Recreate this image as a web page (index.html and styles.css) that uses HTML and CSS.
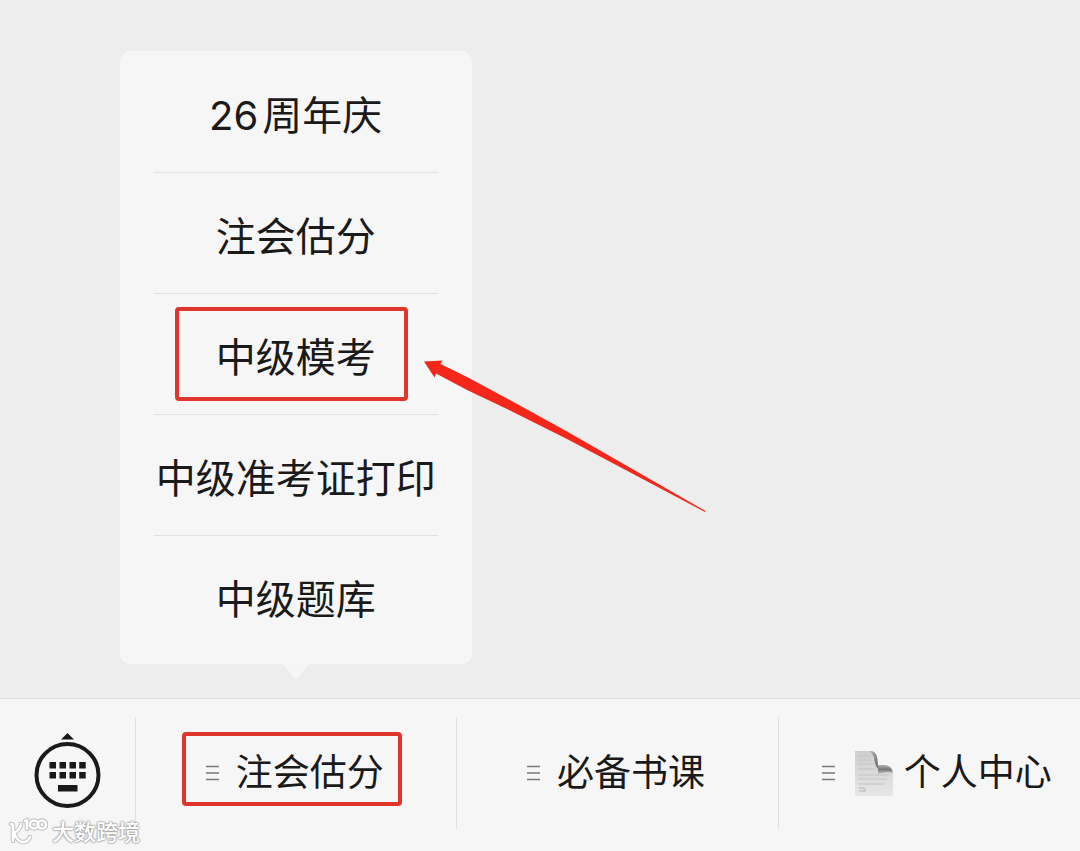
FILE: index.html
```
<!DOCTYPE html>
<html lang="zh-CN">
<head>
    <meta charset="UTF-8">
    <meta name="viewport" content="width=device-width, initial-scale=1.0">
    <title>注会估分</title>
    <link rel="stylesheet" href="styles.css">
</head>
<body>
    <main class="chat"></main>

    <footer class="bar">
        <button class="keyboard" type="button" aria-label="键盘">
            <svg width="68" height="76" viewBox="0 0 68 76" fill="#1a1a1a">
                <path d="M33.500 0L40 6.500H27z"/>
                <circle cx="33.500" cy="42" r="31" fill="none" stroke="#1a1a1a" stroke-width="4"/>
                <path d="M15.500 29h6.500v6.500h-6.500zM25.500 29h6.500v6.500h-6.500zM35.500 29h6.500v6.500h-6.500zM45.200 29h6.500v6.500h-6.500z"/>
                <path d="M15.500 39h6.500v6.500h-6.500zM25.500 39h6.500v6.500h-6.500zM35.500 39h6.500v6.500h-6.500zM45.200 39h6.500v6.500h-6.500z"/>
                <path d="M24 52h19.500v6.500H24z"/>
            </svg>
        </button>

        <nav class="tabs">
            <div class="tab">
                <button class="tab-button" type="button">
                    <span class="tab-label marked">
                        <svg class="lines" width="14" height="16" viewBox="0 0 14 16"><path d="M0 1.500h13M0 8h13M0 14.500h13"/></svg>
                        注会估分
                    </span>
                </button>

                <!-- Untermenü über dem ersten Tab -->
                <div class="popup">
                    <ul class="menu">
                        <li><a href="#"><span class="number">26</span>周年庆</a></li>
                        <li><a href="#">注会估分</a></li>
                        <li><a href="#"><span class="marked">中级模考</span></a></li>
                        <li><a href="#">中级准考证打印</a></li>
                        <li><a href="#">中级题库</a></li>
                    </ul>
                    <svg class="arrow" width="284" height="154" viewBox="0 0 284 154">
                        <path d="M0 1.500L18.500 0.500L16.500 4L43 17L83 38.500L143 71.500L281.500 151L281 152L143 79L83 49L43 30L12 13.500L10.500 17.500z" fill="#f5261a"/>
                    </svg>
                </div>
            </div>

            <div class="tab">
                <button class="tab-button" type="button">
                    <span class="tab-label">
                        <svg class="lines" width="14" height="16" viewBox="0 0 14 16"><path d="M0 1.500h13M0 8h13M0 14.500h13"/></svg>
                        必备书课
                    </span>
                </button>
            </div>

            <div class="tab">
                <button class="tab-button" type="button">
                    <span class="tab-label">
                        <svg class="lines" width="14" height="16" viewBox="0 0 14 16"><path d="M0 1.500h13M0 8h13M0 14.500h13"/></svg>
                        <span class="with-page">
                            <svg width="40" height="46" viewBox="0 0 40 46">
                                <defs>
                                    <linearGradient id="sheet" x1="0" y1="0" x2="0" y2="1">
                                        <stop offset="0" stop-color="#cfcfcf"/>
                                        <stop offset="1" stop-color="#e6e6e6"/>
                                    </linearGradient>
                                    <linearGradient id="curl" x1="0" y1="0" x2="0" y2="1">
                                        <stop offset="0" stop-color="#b0b0b0"/>
                                        <stop offset="0.500" stop-color="#777"/>
                                        <stop offset="1" stop-color="#c8c8c8"/>
                                    </linearGradient>
                                    <linearGradient id="fold" x1="0" y1="0" x2="1" y2="0">
                                        <stop offset="0" stop-color="#888" stop-opacity="0"/>
                                        <stop offset="1" stop-color="#666"/>
                                    </linearGradient>
                                </defs>
                                <path d="M1 1H18Q24 2 24 15H32Q38 16 39 23V46H1z" fill="url(#sheet)"/>
                                <path d="M14 1H18Q24 2 24 19Q20 14 20 8Q19 3 14 1z" fill="url(#fold)"/>
                                <path d="M24 15H31Q38 16 39 23Q33 21 24 24z" fill="url(#curl)"/>
                                <path d="M4 6h12M4 10h14M4 14h16M4 19h17M4 25h31M4 29h29M4 34h27" stroke="#c4c4c4" fill="none"/>
                                <path d="M5 38h4l3 2M5 41h7" stroke="#b4b4b4" fill="none"/>
                            </svg>
                            个人中心
                        </span>
                    </span>
                </button>
            </div>
        </nav>
    </footer>

    <!-- Wasserzeichen -->
    <div class="watermark">
        <svg width="40" height="30" viewBox="0 0 40 30" fill="none" stroke-linecap="round" stroke-linejoin="round">
            <g stroke="#bcbcbc" stroke-width="4.500">
                <path d="M3 7L5 8V24M13 7Q12 13 6 16Q10 26 16 25Q20 25 22 20"/>
                <path d="M17 4L19 3V12"/>
                <circle cx="26" cy="7.500" r="4"/>
                <circle cx="34" cy="7.500" r="4"/>
            </g>
            <g stroke="#fff" stroke-width="2.600">
                <path d="M3 7L5 8V24M13 7Q12 13 6 16Q10 26 16 25Q20 25 22 20"/>
                <path d="M17 4L19 3V12"/>
                <circle cx="26" cy="7.500" r="4"/>
                <circle cx="34" cy="7.500" r="4"/>
            </g>
        </svg>
        <span>大数跨境</span>
    </div>
</body>
</html>
```

FILE: styles.css
```
/* Allgemeines Styling */
* {
    box-sizing: border-box;
}

body {
    font-family: Inter, "Noto Sans CJK SC", sans-serif;
    display: flex;
    flex-direction: column;
    min-height: 100vh;
    margin: 0;
    background-color: #ededed;
    color: #1a1a1a;
    position: relative;
}

button {
    margin: 0;
    padding: 0;
    border: none;
    background: none;
    color: inherit;
    font: inherit;
    cursor: pointer;
}

svg {
    display: block;
    flex-shrink: 0;
}

.chat {
    flex: 1;
}

/* Untere Leiste */
.bar {
    display: flex;
    height: 153px;
    border-top: 1px solid #e0e0e0;
    background-color: #f6f6f6;
}

.keyboard {
    display: flex;
    justify-content: center;
    align-items: center;
    width: 135px;
    padding-bottom: 8px;
}

.tabs {
    display: flex;
    flex: 1;
}

.tab {
    display: flex;
    width: 34%;
    padding: 18px 0 22px;
    position: relative;
}
.tab:last-child {
    flex: 1;
}
.tab:last-child .tab-label {
    gap: 18px;
    margin-left: 18px;
}

.tab-button {
    flex: 1;
    display: flex;
    justify-content: center;
    align-items: center;
    padding-right: 3px;
    border-left: 1px solid #e0e0e0;
}

.tab-label {
    display: flex;
    align-items: center;
    gap: 16px;
    font-size: 37px;
    line-height: 52px;
    white-space: nowrap;
}

.with-page {
    display: flex;
    align-items: center;
    gap: 10px;
}

.lines {
    fill: none;
    stroke: #777;
    stroke-width: 1.5;
}

/* Untermenü */
.popup {
    position: absolute;
    bottom: calc(100% + 35px);
    left: 50%;
    width: 352px;
    margin-left: -176px;
    padding: 0 34px;
    border-radius: 10px;
    background-color: #f6f6f6;
}
.popup::after {
    content: "";
    position: absolute;
    top: 100%;
    left: 50%;
    margin-left: -13px;
    border: 13px solid transparent;
    border-top: 16px solid #f6f6f6;
    border-bottom: none;
}

.menu {
    margin: 0;
    padding: 1px 0 8px;
    list-style: none;
}
.menu li {
    border-bottom: 1px solid #e3e3e3;
}
.menu li:last-child {
    border-bottom: none;
}
.menu a {
    display: block;
    padding: 36px 0 28px;
    color: inherit;
    font-size: 40px;
    line-height: 56px;
    text-align: center;
    text-decoration: none;
    white-space: nowrap;
}
.number {
    margin-right: 4px;
}

/* Rote Markierung */
.marked {
    position: relative;
}
.marked::after {
    content: "";
    position: absolute;
    border: 4px solid #e0352b;
    border-radius: 4px;
}
.menu .marked {
    display: inline-block;
}
.menu .marked::after {
    inset: -23px -32px -15px -41px;
}
.tab-label.marked::after {
    inset: -15px -18px -7px -24px;
}

.arrow {
    position: absolute;
    top: 309px;
    left: 304px;
}

/* Wasserzeichen */
.watermark {
    position: absolute;
    bottom: 4px;
    left: 8px;
    display: flex;
    align-items: center;
    gap: 4px;
    color: #fff;
    font-size: 22px;
    font-weight: 500;
    line-height: 30px;
    text-shadow: 0 0 2px #999, 0 0 2px #999, 0 0 2px #aaa;
    pointer-events: none;
}
```
